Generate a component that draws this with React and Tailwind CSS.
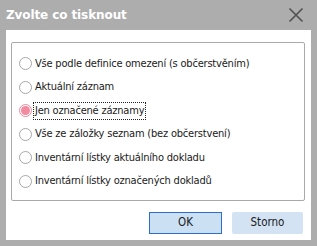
import React from "react";

const items = [
  "Vše podle definice omezení (s občerstvěním)",
  "Aktuální záznam",
  "Jen označené záznamy",
  "Vše ze záložky seznam (bez občerstvení)",
  "Inventární lístky aktuálního dokladu",
  "Inventární lístky označených dokladů",
];

function Radio({ checked }) {
  return checked ? (
    <span className="w-[13px] h-[13px] rounded-full border border-[#f08aa0] bg-white flex items-center justify-center shrink-0">
      <span className="w-[9px] h-[9px] rounded-full bg-[#f28aa0]" />
    </span>
  ) : (
    <span className="w-[13px] h-[13px] rounded-full border border-[#a8a8a8] bg-white shrink-0" />
  );
}

export default function App() {
  return (
    <div
      className="w-[317px] h-[246px] bg-[#adadad] flex flex-col overflow-hidden"
      style={{ fontFamily: "'DejaVu Sans', sans-serif" }}
    >
      <div className="h-[30px] flex items-center justify-between pl-[6px] pr-[13px]">
        <span className="text-white font-bold text-[12px] leading-none tracking-[-0.1px]">Zvolte co tisknout</span>
        <svg width="16" height="16" viewBox="0 0 16 16">
          <path d="M1.5 1.5 L14.5 14.5 M14.5 1.5 L1.5 14.5" stroke="#505050" strokeWidth="1.6" fill="none" />
        </svg>
      </div>
      <div
        className="mx-[6px] h-[210px] bg-white flex flex-col pt-[12px] pl-[5px] pr-[6px]"
        style={{ fontFamily: "'DejaVu Sans Condensed', 'DejaVu Sans', sans-serif" }}
      >
        <div className="h-[159px] border border-[#a9a9a9] rounded-[2px] flex flex-col pt-[9px] pl-[7px]">
          {items.map((t, i) => (
            <div key={i} className="h-[23.5px] flex items-center gap-[2px] text-[11px] tracking-[-0.2px] text-[#1a1a1a]">
              <Radio checked={i === 2} />
              <span
                className={
                  "px-[1px] leading-[16px] " +
                  (i === 2 ? "outline outline-1 outline-dotted outline-[#222]" : "")
                }
              >
                {t}
              </span>
            </div>
          ))}
        </div>
        <div className="flex justify-end gap-[10px] mt-[11px] pr-[2px]">
          <button className="w-[73px] h-[22px] bg-[#cce0f4] border border-[#2c6fc4] text-[11.5px] text-[#1a1a1a]">
            OK
          </button>
          <button className="w-[71px] h-[22px] bg-[#d3e3f4] rounded-[2px] text-[11.5px] text-[#1a1a1a]">
            Storno
          </button>
        </div>
      </div>
    </div>
  );
}
